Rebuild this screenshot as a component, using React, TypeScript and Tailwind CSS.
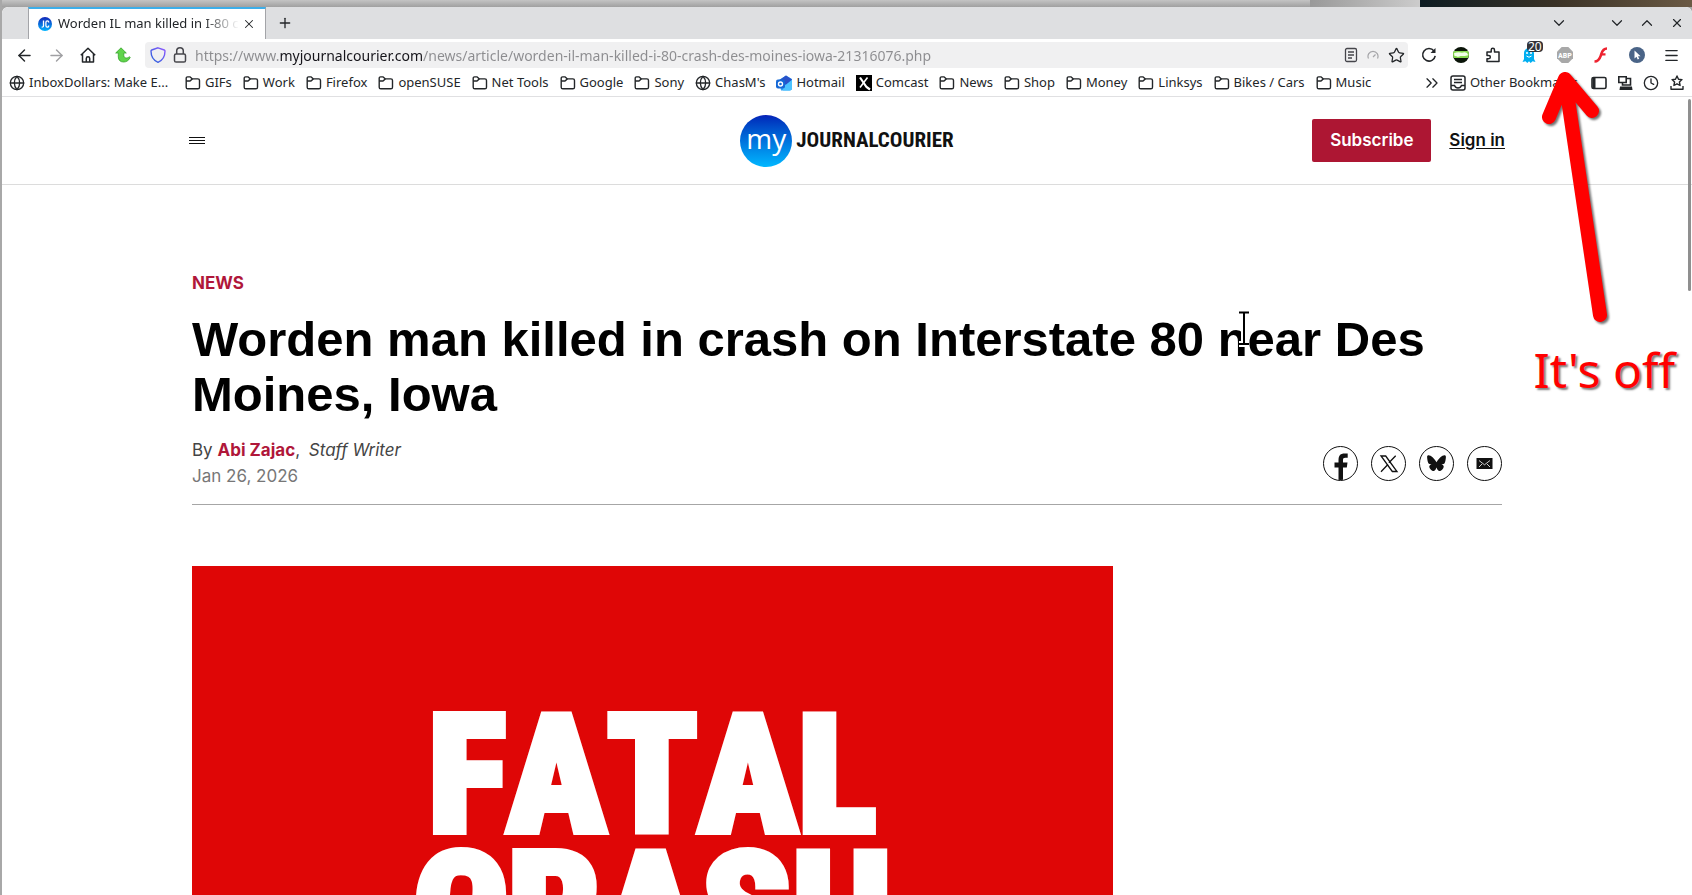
import React from 'react'
import { ArrowLeft, ArrowRight, ChevronDown, ChevronUp, ChevronsRight, Clock, Globe, Menu, Plus, Star, X } from 'lucide-react'

interface Bookmark {
  label: string
  kind: 'folder' | 'globe' | 'hotmail' | 'comcast'
}

const BOOKMARKS: Bookmark[] = [
  { label: 'InboxDollars: Make E...', kind: 'globe' },
  { label: 'GIFs', kind: 'folder' },
  { label: 'Work', kind: 'folder' },
  { label: 'Firefox', kind: 'folder' },
  { label: 'openSUSE', kind: 'folder' },
  { label: 'Net Tools', kind: 'folder' },
  { label: 'Google', kind: 'folder' },
  { label: 'Sony', kind: 'folder' },
  { label: "ChasM's", kind: 'globe' },
  { label: 'Hotmail', kind: 'hotmail' },
  { label: 'Comcast', kind: 'comcast' },
  { label: 'News', kind: 'folder' },
  { label: 'Shop', kind: 'folder' },
  { label: 'Money', kind: 'folder' },
  { label: 'Linksys', kind: 'folder' },
  { label: 'Bikes / Cars', kind: 'folder' },
  { label: 'Music', kind: 'folder' },
]

function IconButton({ label, width = 'w-8', children }: { label: string; width?: string; children: React.ReactNode }) {
  return (
    <button type="button" aria-label={label} className={`flex h-7 shrink-0 items-center justify-center ${width}`}>
      {children}
    </button>
  )
}

function BookmarkIcon({ kind }: { kind: Bookmark['kind'] }) {
  if (kind === 'globe') return <Globe size={16} strokeWidth={2} className="shrink-0" />
  if (kind === 'hotmail') {
    return (
      <svg width="16" height="16" viewBox="0 0 16 16" className="shrink-0">
        <path d="M3 5 10 .5 16 4v9a2.500 2.500 0 0 1-2.500 2.500H5z" fill="#2fa4f5" />
        <path d="M3.500 5 10 .5 16 4.500 10 10z" fill="#2a52c9" />
        <path d="m16 5-9 7v3.500h6.500A2.500 2.500 0 0 0 16 13z" fill="#4cc3ff" />
        <rect y="4.500" width="9" height="9" rx="2" fill="#1568d6" />
        <circle cx="4.500" cy="9" r="2" fill="none" stroke="#fff" strokeWidth="1.400" />
      </svg>
    )
  }
  if (kind === 'comcast') {
    return (
      <svg width="16" height="16" viewBox="0 0 16 16" className="shrink-0">
        <rect width="16" height="16" fill="#000" />
        <path d="M4 2.500 10.500 12l3.500 2.500" fill="none" stroke="#fff" strokeWidth="2.200" />
        <path d="M11.500 2.500 4 12.500" fill="none" stroke="#fff" strokeWidth="1.600" />
      </svg>
    )
  }
  return (
    <svg width="16" height="16" viewBox="0 0 16 16" className="shrink-0" fill="none" stroke="currentColor" strokeWidth="1.400" strokeLinejoin="round">
      <path d="M1.200 3.300c0-.9.500-1.400 1.400-1.400h2.600l2.200 2h5.500c1 0 1.600.6 1.600 1.600v6.700c0 1-.6 1.600-1.600 1.600H2.800c-1 0-1.600-.6-1.600-1.600z" />
      <path d="M1.200 6H5l2.400-2.100" />
    </svg>
  )
}

function TabBar() {
  return (
    <div className="flex h-8 items-stretch rounded-t-md bg-[#dedfe1] pl-[26px]">
      <div className="flex w-[238px] items-center border-x border-t-2 border-x-[#a3a4a8] border-t-[#3daee9] bg-white pl-[9px] pr-1.5">
        <svg width="14" height="14" viewBox="0 0 14 14" className="mr-1.5 shrink-0">
          <defs>
            <linearGradient id="fav" x2="0" y2="1">
              <stop stopColor="#1226b8" />
              <stop offset="1" stopColor="#00b4ff" />
            </linearGradient>
          </defs>
          <circle cx="7" cy="7" r="7" fill="url(#fav)" />
          <path d="M5.500 3.500v5.200q0 1.600-1.800 1.500M10.700 5.500q0-1.700-1.400-1.700T7.900 5.500v3q0 1.700 1.400 1.700t1.400-1.700" fill="none" stroke="#fff" strokeWidth="1.300" />
        </svg>
        <span className="flex-1 overflow-hidden whitespace-nowrap text-[13px] [mask-image:linear-gradient(to_right,#000_80%,transparent)]">
          Worden IL man killed in I-80 crash
        </span>
        <button type="button" aria-label="Close tab" className="flex w-5 shrink-0 items-center justify-center">
          <X size={14} strokeWidth={1.8} />
        </button>
      </div>
      <div className="flex flex-1 items-center pl-[3px]">
        <IconButton label="New tab"><Plus size={16} strokeWidth={2} /></IconButton>
      </div>
      <div className="flex items-center">
        <IconButton label="List all tabs"><ChevronDown size={18} strokeWidth={1.6} /></IconButton>
        <span className="w-[27px]" />
        <IconButton label="Minimize" width="w-[30px]"><ChevronDown size={18} strokeWidth={1.6} /></IconButton>
        <IconButton label="Maximize" width="w-[30px]"><ChevronUp size={18} strokeWidth={1.6} /></IconButton>
        <IconButton label="Close window" width="w-[30px]"><X size={14} strokeWidth={2} /></IconButton>
      </div>
    </div>
  )
}

function AddressBar() {
  return (
    <div className="flex h-[26px] min-w-0 flex-1 items-center rounded bg-[#f0f0f1] pl-[5px]">
      <svg width="16" height="16" viewBox="0 0 16 16" className="shrink-0" aria-label="Tracking protection">
        <defs>
          <linearGradient id="shield" x1="1" y1="0" x2="0" y2="1">
            <stop stopColor="#9059ff" />
            <stop offset="1" stopColor="#2563d9" />
          </linearGradient>
        </defs>
        <path d="M8 .8 14.300 3c.5.2.7.5.7 1 0 5-2 9.200-7 11.300C3 13.200 1 9 1 4c0-.5.2-.8.700-1z" fill="none" stroke="url(#shield)" strokeWidth="1.400" />
      </svg>
      <svg width="16" height="18" viewBox="0 0 16 18" className="ml-1.5 shrink-0" fill="none" stroke="#45454b" strokeWidth="1.500">
        <rect x="2.500" y="8" width="11" height="8" rx="1.600" />
        <path d="M4.700 8V5a3.300 3.300 0 0 1 6.600 0v3" />
      </svg>
      <input
        type="text"
        aria-label="Address"
        defaultValue="https://www.myjournalcourier.com/news/article/worden-il-man-killed-i-80-crash-des-moines-iowa-21316076.php"
        className="ml-[7px] min-w-0 flex-1 bg-[linear-gradient(to_right,#8c8c8f_84px,#15141a_84px,#15141a_227px,#8c8c8f_227px)] bg-clip-text text-[14px] text-transparent outline-none"
      />
      <IconButton label="Reader view" width="w-[22px]">
        <svg width="14" height="16" viewBox="0 0 14 16" fill="none" stroke="#45454b" strokeWidth="1.300">
          <rect x="1.500" y="1.500" width="11" height="13" rx="1.500" />
          <path d="M4 5h6M4 8h6M4 11h4" />
        </svg>
      </IconButton>
      <IconButton label="Page speed" width="w-[22px]">
        <svg width="12" height="12" viewBox="0 0 12 12" fill="none" stroke="#a5a5a8" strokeWidth="1.200">
          <path d="M1.500 9.500a5 5 0 1 1 9 0M6 8l2.500-2.500" />
        </svg>
      </IconButton>
      <IconButton label="Bookmark this page" width="w-[24px]"><Star size={17} strokeWidth={1.8} /></IconButton>
    </div>
  )
}

function Extensions() {
  return (
    <div className="flex items-center pl-[5px] pr-[5px]">
      <IconButton label="Reload">
        <svg width="16" height="16" viewBox="0 0 16 16" fill="none" stroke="currentColor" strokeWidth="1.600">
          <path d="M13 4a6.300 6.300 0 1 0 1.200 4.800" />
          <path d="M14.500 1v5h-5z" fill="currentColor" stroke="none" />
        </svg>
      </IconButton>
      <IconButton label="openSUSE extension">
        <svg width="16" height="16" viewBox="0 0 16 16">
          <circle cx="8" cy="8" r="8" fill="#0a1408" />
          <path d="M0 7q0-2 1-3h14q1 1 1 4l-1 3H1Q0 10 0 7" fill="#86d84f" />
          <path d="M1 6.200q4-1.500 8-.5 3-1 5 .3l1.200 2.200-3.400.8H7.500q-2 1.500-4 .3L1.500 9z" fill="#f2ffe8" />
        </svg>
      </IconButton>
      <IconButton label="Extensions">
        <svg width="16" height="16" viewBox="0 0 16 16" fill="none" stroke="currentColor" strokeWidth="1.500" strokeLinejoin="round">
          <path d="M2 5h4.200V3a1.600 1.600 0 0 1 3.300 0v2H14v9.500H2V11.700h1.700a1.600 1.600 0 0 0 0-3.300H2z" />
        </svg>
      </IconButton>
      <div className="relative ml-0.5">
        <IconButton label="Ghostery" width="w-9">
          <svg width="14" height="16" viewBox="0 0 14 16">
            <path d="M2 6a5 5 0 0 1 10 0v6l1.500 3-3-.7L8.700 16 7 14.300 5.300 16l-1.800-1.700-3 .7L2 12z" fill="#00aef0" />
            <circle cx="5" cy="6" r="1" fill="#fff" />
            <circle cx="9" cy="6" r="1" fill="#fff" />
            <path d="M4.500 9q2.500 2.500 5 0" fill="none" stroke="#fff" />
          </svg>
        </IconButton>
        <span className="absolute left-4 top-0 rounded-sm bg-[#333338] px-px text-[12px] leading-[11px] text-white">20</span>
      </div>
      <IconButton label="Adblock Plus" width="w-9">
        <svg width="16" height="16" viewBox="0 0 16 16">
          <path d="M4.700 0h6.600L16 4.700v6.600L11.300 16H4.700L0 11.300V4.700z" fill="#a8a8a8" />
          <text x="8" y="11" textAnchor="middle" fontSize="8" fontWeight="700" fontFamily="Roboto Condensed, sans-serif" fill="#fff">ABP</text>
        </svg>
      </IconButton>
      <IconButton label="Flash" width="w-9">
        <svg width="14" height="16" viewBox="0 0 14 16" fill="none" stroke="#ee2330">
          <path d="M13 1.500C8.500 1.500 8 5 7 8s-2 6.500-6.500 6.500" strokeWidth="2.600" />
          <path d="M7 7.300h4.500" strokeWidth="2.200" />
        </svg>
      </IconButton>
      <IconButton label="Pointer extension" width="w-9">
        <svg width="16" height="16" viewBox="0 0 16 16">
          <circle cx="8" cy="8" r="8" fill="#4a6487" />
          <path d="M5.500 3.500v8l2-1.700 1.200 2.700 1.500-.7L9 9.300h2.600z" fill="#fff" />
        </svg>
      </IconButton>
      <IconButton label="Open menu"><Menu size={17} strokeWidth={1.8} /></IconButton>
    </div>
  )
}

function BookmarksBar() {
  return (
    <nav aria-label="Bookmarks" className="flex h-[29px] items-center border-b border-[#e0e0e2] pt-[2px] pl-[7px] pr-[7px] text-[13px]">
      <ul className="flex min-w-0 flex-1 items-center gap-[11px] overflow-hidden">
        {BOOKMARKS.map((b) => (
          <li key={b.label} className="shrink-0 first:w-[165px]">
            <a href="#" className="flex items-center gap-1 whitespace-nowrap">
              <BookmarkIcon kind={b.kind} />
              {b.label}
            </a>
          </li>
        ))}
      </ul>
      <button type="button" aria-label="More bookmarks" className="mr-2"><ChevronsRight size={20} strokeWidth={1.6} /></button>
      <button type="button" className="mr-[13px] flex items-center gap-1 whitespace-nowrap">
        <svg width="16" height="16" viewBox="0 0 16 16" fill="none" stroke="currentColor" strokeWidth="1.500">
          <rect x="1" y="1" width="14" height="14" rx="2" />
          <path d="M4 4.500h8M4 7.500h8M1 10.500h3.500q1 2.500 3.500 2.500t3.500-2.500H15" />
        </svg>
        Other Bookmarks
      </button>
      <div className="flex items-center gap-[10px]">
        <button type="button" aria-label="Sidebar">
          <svg width="16" height="16" viewBox="0 0 16 16" fill="none" stroke="currentColor" strokeWidth="1.600">
            <rect x="1" y="2.500" width="14" height="11" rx="1.500" />
            <path d="M3 3v10" strokeWidth="3" />
          </svg>
        </button>
        <button type="button" aria-label="Synced tabs">
          <svg width="16" height="16" viewBox="0 0 16 16" fill="none" stroke="currentColor" strokeWidth="1.600">
            <path d="M1.800 1.800h7.400v5.700H1.800zM9.200 3.500h4.300V10H5.500V7.500" />
            <path d="M3 11.500h12l.5 3.500h-13z" fill="currentColor" stroke="none" />
          </svg>
        </button>
        <button type="button" aria-label="History"><Clock size={16} strokeWidth={2} /></button>
        <button type="button" aria-label="Bookmarks menu">
          <svg width="16" height="16" viewBox="0 0 16 16" fill="none" stroke="currentColor" strokeWidth="1.400" strokeLinejoin="round">
            <path d="m8 1 1.500 3.200 3.500.4-2.600 2.400.7 3.500L8 8.800l-3.100 1.700.7-3.500L3 4.600l3.500-.4zM2 11v3.300h12V11" />
          </svg>
        </button>
      </div>
    </nav>
  )
}

function SiteHeader() {
  return (
    <header className="border-b border-[#dcdcdc]">
      <div className="mx-auto flex h-[87px] max-w-[1316px] items-center">
        <div className="flex flex-1">
          <button type="button" aria-label="Menu">
            <svg width="16" height="16" viewBox="0 0 16 16" stroke="#111" strokeWidth="1">
              <path d="M0 4.500h16M0 7.500h16M0 10.500h16" />
            </svg>
          </button>
        </div>
        <a href="#" aria-label="myJournalCourier" className="flex items-center gap-1">
          <span className="flex size-[52px] items-center justify-center rounded-full bg-linear-to-b from-[#0a22b8] to-[#00b7ff] pb-1.5 font-['Open_Sans','Noto_Sans',sans-serif] text-[28px] leading-none font-normal text-white">
            my
          </span>
          <span className="font-['Roboto_Condensed',sans-serif] text-[21px] font-bold text-[#111]">JOURNALCOURIER</span>
        </a>
        <div className="flex flex-1 items-center justify-end gap-[18px] font-['Inter',sans-serif] text-[17px] font-semibold">
          <button type="button" className="h-[43px] w-[119px] rounded-xs bg-[#ad1633] text-white">Subscribe</button>
          <a href="#" className="text-[#111] underline underline-offset-2">Sign in</a>
        </div>
      </div>
    </header>
  )
}

function ShareLink({ label, children }: { label: string; children: React.ReactNode }) {
  return (
    <a href="#" aria-label={label} className="flex size-[35px] items-center justify-center overflow-hidden rounded-full border border-[#111]">
      <svg width="33" height="33" viewBox="0 0 33 33" fill="#111">{children}</svg>
    </a>
  )
}

function Article() {
  return (
    <main className="mx-auto max-w-[1310px] pt-[86px]">
      <a href="#" className="block font-['Inter',sans-serif] text-[17px] leading-6 font-bold text-[#b0173a]">NEWS</a>
      <h1 className="mt-[17px] font-['Liberation_Sans',Arial,sans-serif] text-[49px] leading-[55px] font-bold text-black">
        Worden man killed in crash on Interstate 80 near Des Moines, Iowa
      </h1>
      <div className="mt-[15px] flex items-center justify-between border-b border-[#a6a6a6] pb-[15px]">
        <div className="font-['Inter',sans-serif] text-[17px] leading-[26px]">
          <p className="text-[#444]">
            By <a href="#" className="font-bold text-[#b0173a]">Abi Zajac</a>, <em className="ml-1">Staff Writer</em>
          </p>
          <p className="text-[#777]">Jan 26, 2026</p>
        </div>
        <div className="flex gap-[13px]">
          <ShareLink label="Share on Facebook">
            <path d="M14.500 33V20.500H10.500v-5h4V13c0-4.500 2-6.500 6-6.500h3.200v4.300h-2.400c-1.700 0-2.300.7-2.300 2.200v2.500h4.500l-.7 5H19V33z" />
          </ShareLink>
          <ShareLink label="Share on X">
            <path d="M9 9h4.700L25 24.500h-4.700z" fill="none" stroke="#111" strokeWidth="1.300" />
            <path d="m23.700 8.700-6.800 7.100M9 24.800l6.900-7.300" fill="none" stroke="#111" strokeWidth="1.300" />
          </ShareLink>
          <ShareLink label="Share on Bluesky">
            <path d="M16.500 15.300c1.200-2.400 3.500-5 6-6.500 1.800-1 3.500-.8 3.400 1.200-.1 2-.6 5.300-1.200 6.100-.6 1-1.700 1.400-3.200 1.500 2.300.5 2.900 2.100 1.600 3.800-2.600 3.500-4.800 3-5.700 1.200l-.9-2-.9 2c-.9 1.800-3.100 2.300-5.700-1.200-1.300-1.700-.7-3.300 1.600-3.800-1.500-.1-2.600-.5-3.200-1.500-.6-.8-1.100-4.100-1.200-6.100-.1-2 1.600-2.200 3.400-1.200 2.500 1.500 4.800 4.100 6 6.500z" />
          </ShareLink>
          <ShareLink label="Share by email">
            <rect x="8.500" y="11" width="16" height="11" />
            <path d="m11 13.500 5.500 4.300 5.500-4.300M11 20l3-3M22 20l-3-3" fill="none" stroke="#fff" strokeWidth=".8" />
          </ShareLink>
        </div>
      </div>
      <figure className="mt-[61px] aspect-[3/2] max-w-[921px] bg-[#df0606] pt-[141px]">
        <p className="mx-auto w-[520px] text-center font-['Roboto_Condensed',sans-serif] text-[165px] leading-[137px] font-black text-white [font-kerning:none] [-webkit-text-stroke:6px_white]">
          FATAL CRASH
        </p>
      </figure>
    </main>
  )
}

// Hand-drawn note pointing at the blocker icon, with the mouse pointer left on the headline
function Annotation() {
  return (
    <div className="pointer-events-none absolute inset-0 overflow-hidden">
      <svg width="80" height="260" viewBox="0 0 80 260" className="absolute right-[72px] top-[66px] drop-shadow-[2px_2px_1px_rgba(0,0,0,0.55)]">
        <path d="M25 13 60 249M9 51 25 13l27 32" fill="none" stroke="#f00" strokeWidth="14" strokeLinecap="round" strokeLinejoin="round" />
      </svg>
      <p className="absolute right-[17px] top-[339px] text-[48px] leading-[62px] text-[#f00] [text-shadow:2px_2px_2px_rgba(0,0,0,0.5)]">It's off</p>
      <svg width="16" height="40" viewBox="0 0 16 40" className="absolute left-[1236px] top-[308px]" fill="none">
        <path d="M3 4.500h10M8 4v32M3 36h10" stroke="#fff" strokeWidth="6" strokeLinejoin="round" />
        <path d="M3 4.500h10M8 4v32M3 36h10" stroke="#000" strokeWidth="2" />
      </svg>
      <span className="absolute right-px top-[99px] h-[192px] w-[3px] rounded-full bg-[#8f8f8f]" />
    </div>
  )
}

export default function App() {
  return (
    <div className="relative flex h-screen flex-col overflow-hidden bg-[#a8a8a8] pl-0.5 font-['Noto_Sans',sans-serif] text-[#232629]">
      <div className="flex h-[7px] shrink-0 bg-linear-to-b from-[#c4c4c4] to-[#a0a0a0]">
        <span className="ml-auto w-[110px] bg-linear-to-r from-[#999] to-[#ccc]" />
        <span className="w-[272px] bg-linear-to-r from-[#0d1c22] via-[#3a3226] to-[#6b5a45]" />
      </div>
      <div className="flex-1 overflow-hidden rounded-t-md bg-white">
        <TabBar />
        <div className="flex h-[29px] items-center pt-[3px] pl-[6px]">
          <IconButton label="Back"><ArrowLeft size={19} strokeWidth={1.8} /></IconButton>
          <IconButton label="Forward"><ArrowRight size={19} strokeWidth={1.8} className="text-[#a0a0a3]" /></IconButton>
          <IconButton label="Home">
            <svg width="16" height="16" viewBox="0 0 16 16" fill="none" stroke="currentColor" strokeWidth="1.500" strokeLinejoin="round">
              <path d="m.8 8.200 7.200-7 7.200 7M2.500 7v8h11V7" />
              <path d="M6.300 15v-3.500a1.700 1.700 0 0 1 3.400 0V15" />
            </svg>
          </IconButton>
          <IconButton label="Up one level" width="w-[37px]">
            <svg width="16" height="16" viewBox="0 0 16 16">
              <path d="M6 .8 11.300 6H8.800v2.500c0 2.500 3 3.500 5.700 1.200l.7.800C13.500 14 11 15 8.500 15 5 15 3.300 12.800 3.300 9.800V6H.7z" fill="#5fd44a" stroke="#35a32b" strokeWidth=".8" />
            </svg>
          </IconButton>
          <span className="w-1" />
          <AddressBar />
          <Extensions />
        </div>
        <BookmarksBar />
        <SiteHeader />
        <Article />
      </div>
      <Annotation />
    </div>
  )
}
